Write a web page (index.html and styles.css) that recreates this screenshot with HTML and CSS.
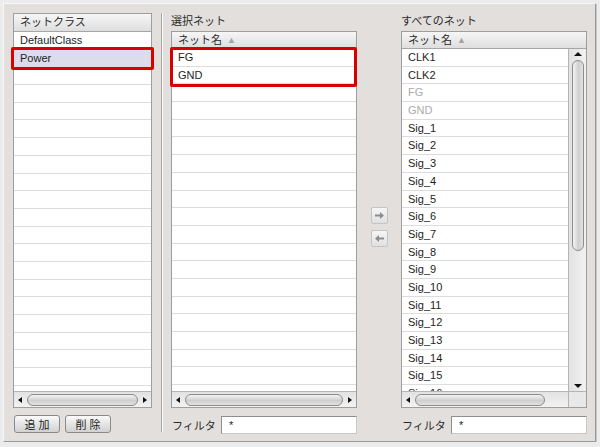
FILE: index.html
```html
<!DOCTYPE html>
<html lang="ja">
<head>
    <meta charset="UTF-8">
    <title>ネットクラス</title>
    <link rel="stylesheet" href="styles.css">
</head>
<body>
    <div class="panel">
        <div class="left-col">
            <div class="list left-list">
                <div class="list-head">ネットクラス</div>
                <div class="list-body">
                    <div class="rows">
                        <div class="row">DefaultClass</div>
                        <div class="row selected">Power</div>
                        <div class="row"></div><div class="row"></div><div class="row"></div>
                        <div class="row"></div><div class="row"></div><div class="row"></div>
                        <div class="row"></div><div class="row"></div><div class="row"></div>
                        <div class="row"></div><div class="row"></div><div class="row"></div>
                        <div class="row"></div><div class="row"></div><div class="row"></div>
                        <div class="row"></div><div class="row"></div><div class="row"></div>
                    </div>
                </div>
                <div class="hscroll">
                    <span class="arr-l"></span>
                    <span class="thumb-h"></span>
                    <span class="arr-r"></span>
                </div>
                <div class="mark mark-left"></div>
            </div>
            <div class="buttons">
                <button class="btn">追 加</button>
                <button class="btn">削 除</button>
            </div>
        </div>

        <div class="sep"></div>

        <div class="mid-col">
            <div class="title">選択ネット</div>
            <div class="list">
                <div class="list-head">ネット名 <span class="sort">▲</span></div>
                <div class="list-body">
                    <div class="rows">
                        <div class="row">FG</div>
                        <div class="row">GND</div>
                        <div class="row"></div><div class="row"></div><div class="row"></div>
                        <div class="row"></div><div class="row"></div><div class="row"></div>
                        <div class="row"></div><div class="row"></div><div class="row"></div>
                        <div class="row"></div><div class="row"></div><div class="row"></div>
                        <div class="row"></div><div class="row"></div><div class="row"></div>
                        <div class="row"></div><div class="row"></div><div class="row"></div>
                    </div>
                </div>
                <div class="hscroll">
                    <span class="arr-l"></span>
                    <span class="thumb-h"></span>
                    <span class="arr-r"></span>
                </div>
                <div class="mark mark-mid"></div>
            </div>
            <div class="filter">
                <label>フィルタ</label>
                <div class="input">*</div>
            </div>
        </div>

        <div class="arrow-col">
            <div class="move-btn">
                <svg width="11" height="9" viewBox="0 0 11 9"><path d="M1 3.5h5V1l4 3.5-4 3.5V5.5H1z" fill="#8c8c8c"/></svg>
            </div>
            <div class="move-btn">
                <svg width="11" height="9" viewBox="0 0 11 9"><path d="M10 3.5H5V1L1 4.5 5 8V5.5h5z" fill="#8c8c8c"/></svg>
            </div>
        </div>

        <div class="right-col">
            <div class="title">すべてのネット</div>
            <div class="list">
                <div class="list-head">ネット名 <span class="sort">▲</span></div>
                <div class="list-body">
                    <div class="rows">
                        <div class="row">CLK1</div>
                        <div class="row">CLK2</div>
                        <div class="row off">FG</div>
                        <div class="row off">GND</div>
                        <div class="row">Sig_1</div>
                        <div class="row">Sig_2</div>
                        <div class="row">Sig_3</div>
                        <div class="row">Sig_4</div>
                        <div class="row">Sig_5</div>
                        <div class="row">Sig_6</div>
                        <div class="row">Sig_7</div>
                        <div class="row">Sig_8</div>
                        <div class="row">Sig_9</div>
                        <div class="row">Sig_10</div>
                        <div class="row">Sig_11</div>
                        <div class="row">Sig_12</div>
                        <div class="row">Sig_13</div>
                        <div class="row">Sig_14</div>
                        <div class="row">Sig_15</div>
                        <div class="row">Sig_16</div>
                    </div>
                    <div class="vscroll">
                        <span class="arr-u"></span>
                        <span class="thumb-v"></span>
                        <span class="arr-d"></span>
                    </div>
                </div>
                <div class="hscroll">
                    <span class="arr-l"></span>
                    <span class="thumb-h"></span>
                    <span class="arr-r"></span>
                    <span class="corner"></span>
                </div>
            </div>
            <div class="filter">
                <label>フィルタ</label>
                <div class="input">*</div>
            </div>
        </div>
    </div>
</body>
</html>
```

FILE: styles.css
```css
body {
    margin: 0;
    background: #ececec;
    font-family: "Liberation Sans", "Noto Sans CJK JP", sans-serif;
    font-size: 11px;
    color: #1e1e1e;
}

.panel {
    box-sizing: border-box;
    display: flex;
    margin: 3px 0 0 3px;
    width: 593px;
    height: 439px;
    padding: 9px 7px 0 9px;
    background: #e3dfdd;
    border: 1px solid;
    border-color: #f8f8f8 #9a9a9a #9a9a9a #f8f8f8;
    box-shadow: 1px 1px 0 #c8c8c8;
}

.left-col {
    width: 139px;
}

.mid-col, .right-col {
    width: 186px;
}

.mid-col {
    margin-left: 8px;
}

.sep {
    margin-left: 9px;
    width: 0;
    height: 419px;
    border-left: 1px solid #a9a6a4;
    border-right: 1px solid #fbfbfb;
}

.title {
    height: 18px;
    line-height: 16px;
    color: #2a2a2a;
}

.list {
    position: relative;
    box-sizing: border-box;
    display: flex;
    flex-direction: column;
    height: 377px;
    border: 1px solid #9e9e9e;
    background: #fff;
}

.left-list {
    height: 395px;
}

.list-head {
    box-sizing: border-box;
    height: 17px;
    line-height: 16px;
    padding-left: 6px;
    background: linear-gradient(#f6f6f6, #dedede);
    border-bottom: 1px solid #a6a6a6;
    color: #2a2a2a;
}

.left-list .list-head {
    height: 18px;
    line-height: 17px;
}

.sort {
    font-size: 9px;
    color: #a4a4a4;
    margin-left: 2px;
    vertical-align: 1px;
}

.list-body {
    flex: 1;
    display: flex;
    overflow: hidden;
}

.rows {
    flex: 1;
    overflow: hidden;
}

.row {
    box-sizing: border-box;
    height: 17.7px;
    line-height: 17px;
    padding-left: 6px;
    border-bottom: 1px solid #dcdcdc;
    white-space: nowrap;
}

.row.selected {
    background: #dcdcec;
}

.row.off {
    color: #aaa;
}

/* scrollbars */
.hscroll {
    position: relative;
    box-sizing: border-box;
    height: 16px;
    border-top: 1px solid #b4b4b4;
    background: linear-gradient(#e2e2e2, #f2f2f2);
    display: flex;
    align-items: center;
}

.arr-l, .arr-r {
    width: 13px;
    height: 14px;
    position: relative;
}

.arr-l::after, .arr-r::after {
    content: "";
    position: absolute;
    top: 4px;
    border-top: 3px solid transparent;
    border-bottom: 3px solid transparent;
}

.arr-l::after {
    left: 4px;
    border-right: 4px solid #111;
}

.arr-r::after {
    left: 5px;
    border-left: 4px solid #111;
}

.thumb-h {
    flex: 1;
    box-sizing: border-box;
    height: 12px;
    border: 1px solid #8c8c8c;
    border-radius: 6px;
    background: linear-gradient(#f4f4f4, #cfcfcf 55%, #e2e2e2);
}

.right-col .thumb-h {
    margin-right: 28px;
}

.corner {
    position: absolute;
    right: 0;
    top: -1px;
    box-sizing: border-box;
    width: 18px;
    height: 16px;
    background: #e8e8e8;
    border-left: 1px solid #b4b4b4;
    border-top: 1px solid #b4b4b4;
}

.vscroll {
    box-sizing: border-box;
    width: 18px;
    border-left: 1px solid #b4b4b4;
    background: linear-gradient(90deg, #e2e2e2, #f2f2f2);
    display: flex;
    flex-direction: column;
    align-items: center;
}

.arr-u, .arr-d {
    width: 14px;
    height: 11px;
    position: relative;
}

.arr-u::after, .arr-d::after {
    content: "";
    position: absolute;
    left: 3px;
    border-left: 4px solid transparent;
    border-right: 4px solid transparent;
}

.arr-u::after {
    top: 3px;
    border-bottom: 4px solid #111;
}

.arr-d::after {
    top: 4px;
    border-top: 4px solid #111;
}

.thumb-v {
    box-sizing: border-box;
    width: 12px;
    height: 191px;
    margin-bottom: auto;
    border: 1px solid #8c8c8c;
    border-radius: 6px;
    background: linear-gradient(90deg, #f4f4f4, #cfcfcf 55%, #e2e2e2);
}

/* red annotation frames */
.mark {
    position: absolute;
    border: 3px solid #d80000;
    border-radius: 2px;
}

.mark-left {
    left: -3px;
    top: 33px;
    width: 137px;
    height: 17px;
}

.mark-mid {
    left: -2px;
    top: 15px;
    width: 181px;
    height: 34px;
}

/* bottom controls */
.buttons {
    display: flex;
    gap: 5px;
    margin-top: 7px;
    padding-left: 1px;
}

.btn {
    box-sizing: border-box;
    width: 46px;
    height: 18px;
    padding: 0;
    font: inherit;
    color: #222;
    border: 1px solid #8a8a8a;
    border-radius: 3px;
    background: linear-gradient(#fbfbfb, #e4e4e4 50%, #d2d2d2);
}

.filter {
    display: flex;
    align-items: center;
    margin-top: 8px;
    height: 17px;
}

.filter label {
    width: 49px;
    padding-left: 1px;
    color: #2a2a2a;
}

.input {
    flex: 1;
    box-sizing: border-box;
    height: 18px;
    line-height: 16px;
    padding-left: 7px;
    background: #fff;
    border: 1px solid #8e8e8e;
    border-right-color: #c8c8c8;
    border-bottom-color: #c8c8c8;
}

.arrow-col {
    width: 44px;
    display: flex;
    flex-direction: column;
    align-items: center;
    gap: 6px;
    padding-top: 194px;
}

.move-btn {
    box-sizing: border-box;
    width: 17px;
    height: 17px;
    border: 1px solid #c4c4c4;
    border-radius: 2px;
    background: linear-gradient(#f6f6f6, #e0e0e0);
    display: flex;
    align-items: center;
    justify-content: center;
}
```
